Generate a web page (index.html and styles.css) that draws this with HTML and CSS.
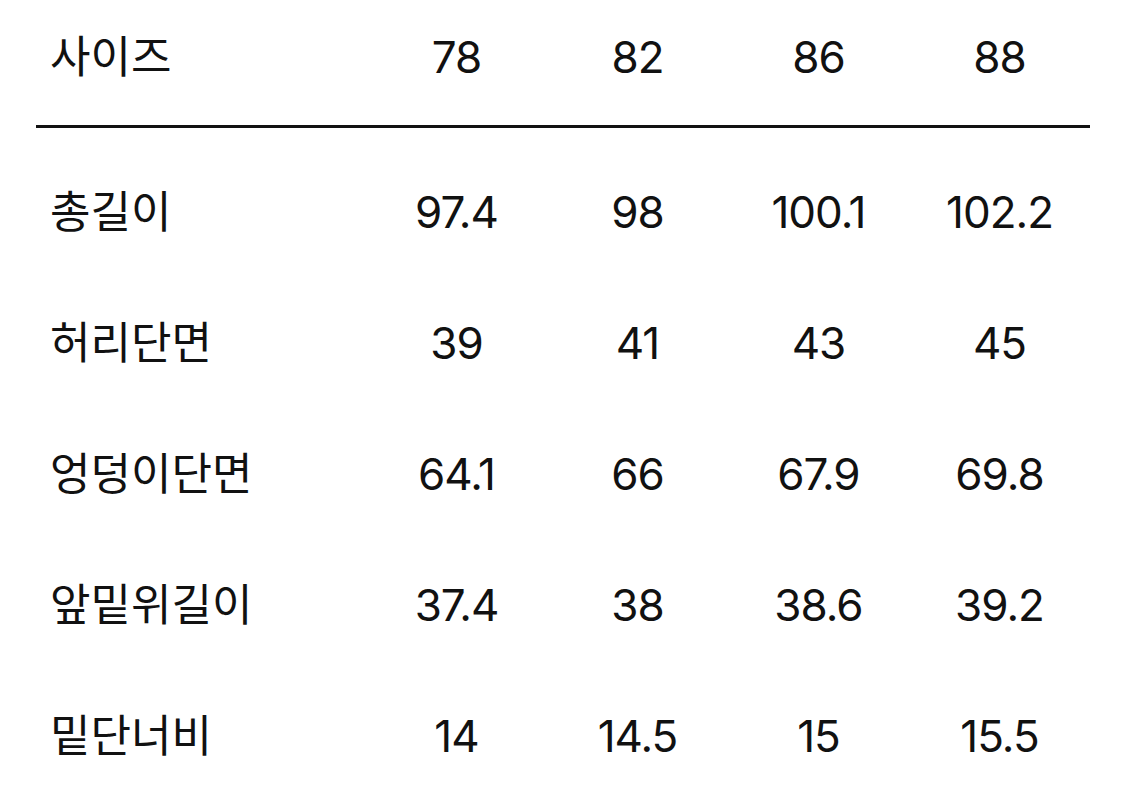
FILE: index.html
```html
<!DOCTYPE html>
<html lang="ko">
<head>
<meta charset="utf-8">
<link rel="stylesheet" href="styles.css">
</head>
<body>
<div class="table">
  <div class="row head">
    <div class="label">사이즈</div><div class="cell">78</div><div class="cell">82</div><div class="cell">86</div><div class="cell">88</div>
  </div>
  <div class="body">
    <div class="row">
      <div class="label">총길이</div><div class="cell">97.4</div><div class="cell">98</div><div class="cell">100.1</div><div class="cell">102.2</div>
    </div>
    <div class="row">
      <div class="label">허리단면</div><div class="cell">39</div><div class="cell">41</div><div class="cell">43</div><div class="cell">45</div>
    </div>
    <div class="row">
      <div class="label">엉덩이단면</div><div class="cell">64.1</div><div class="cell">66</div><div class="cell">67.9</div><div class="cell">69.8</div>
    </div>
    <div class="row">
      <div class="label">앞밑위길이</div><div class="cell">37.4</div><div class="cell">38</div><div class="cell">38.6</div><div class="cell">39.2</div>
    </div>
    <div class="row">
      <div class="label">밑단너비</div><div class="cell">14</div><div class="cell">14.5</div><div class="cell">15</div><div class="cell">15.5</div>
    </div>
  </div>
</div>
</body>
</html>
```

FILE: styles.css
```css
html, body {
  margin: 0;
  padding: 0;
  background: #ffffff;
}
body {
  font-family: Inter, "Noto Sans CJK KR", "Noto Sans", sans-serif;
  color: #111111;
  font-size: 44px;
  line-height: 1;
}
.table {
  margin-left: 36px;
  width: 1054px;
}
.row {
  display: grid;
  grid-template-columns: 330px repeat(4, 181px);
  align-items: center;
  height: 131px;
}
.row.head {
  height: 113px;
  padding-bottom: 12px;
  border-bottom: 3px solid #111111;
}
.body {
  padding-top: 18px;
}
.label {
  padding-left: 14px;
  padding-bottom: 6px;
  font-family: "Noto Sans CJK KR", sans-serif;
}
.cell {
  text-align: center;
  letter-spacing: -1px;
}
```
